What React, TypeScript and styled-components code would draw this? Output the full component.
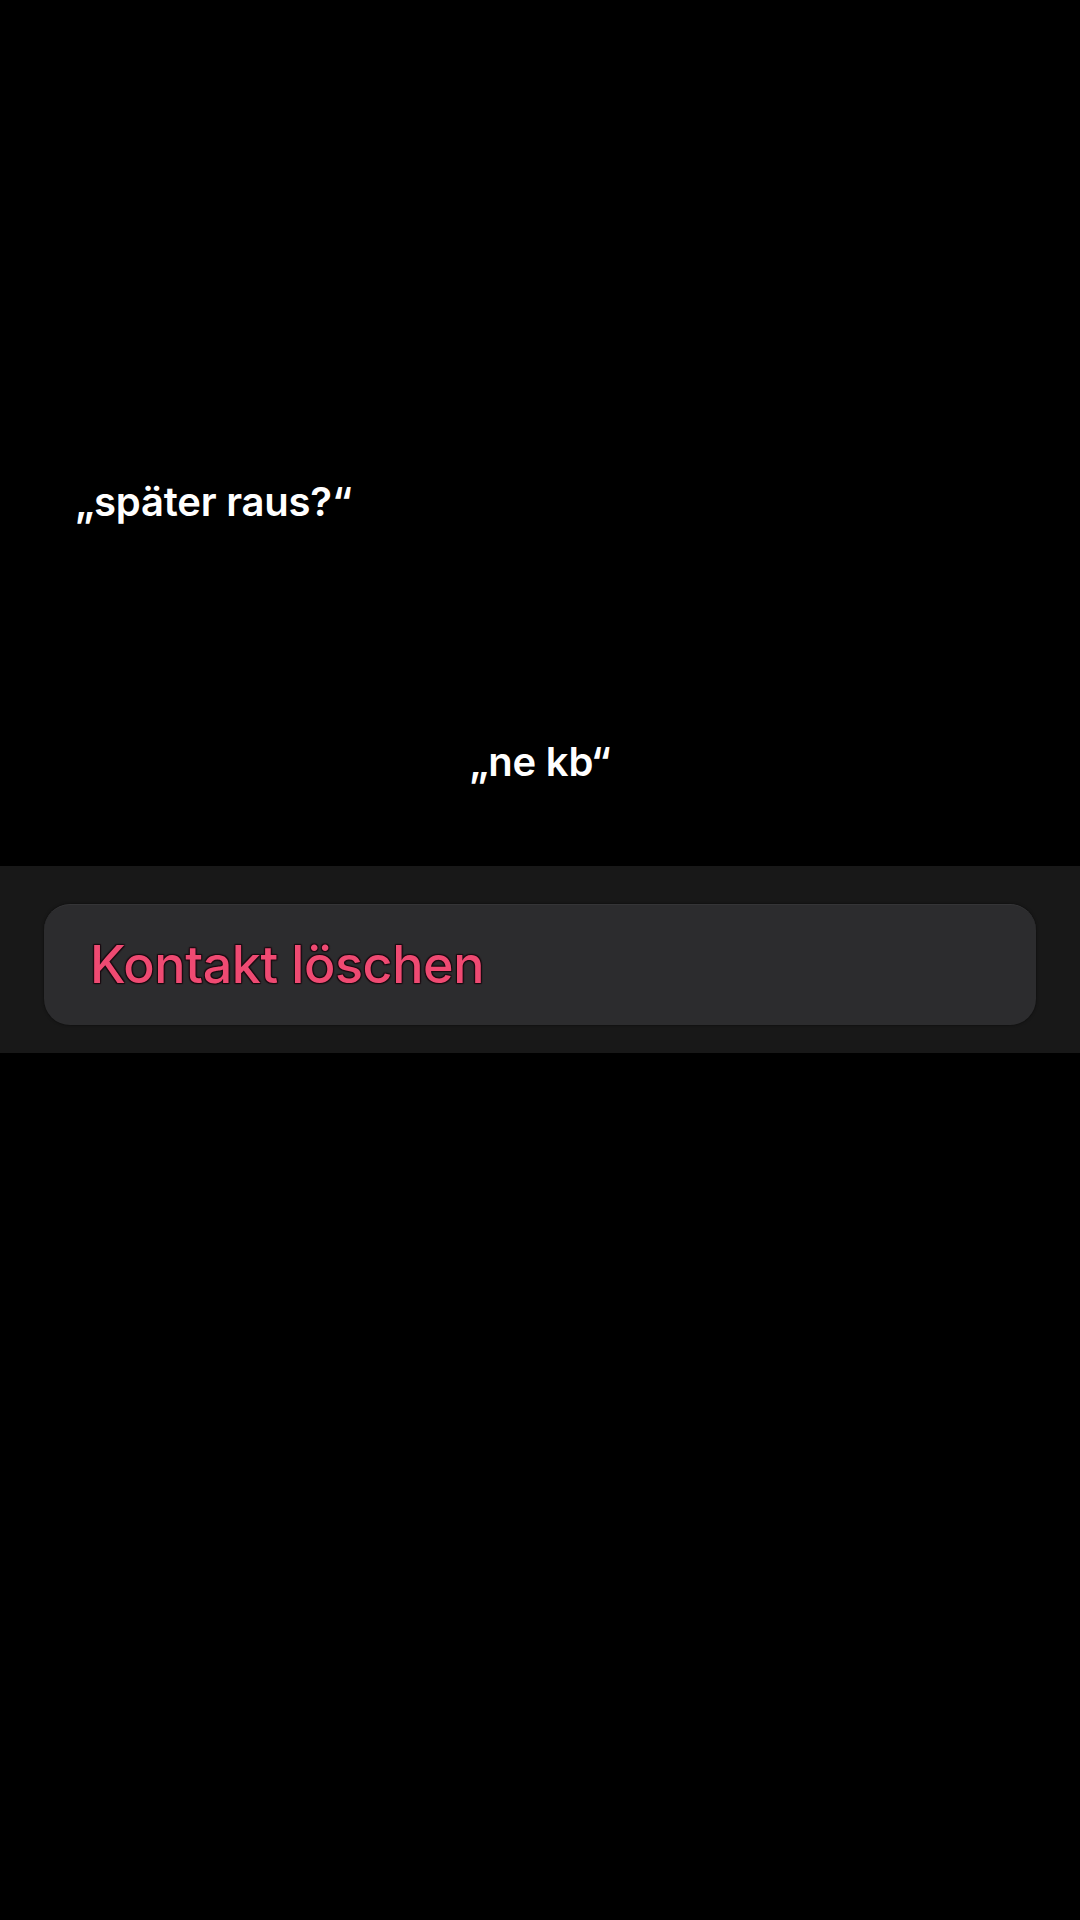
import React from 'react';
import styled, { createGlobalStyle } from 'styled-components';

const GlobalStyle = createGlobalStyle`
  html, body {
    margin: 0;
    padding: 0;
    background-color: #000;
  }
  body {
    font-family: Inter, "Noto Sans", "Liberation Sans", sans-serif;
  }
`;

const Page = styled.div`
  display: flex;
  flex-direction: column;
  width: 1080px;
  height: 1920px;
  background-color: #000;
  overflow: hidden;
`;

const Transcript = styled.div`
  display: flex;
  flex-direction: column;
  height: 866px;
  padding-top: 478px;
  box-sizing: border-box;
`;

const Quote = styled.div<{ align: 'left' | 'center' }>`
  font-size: 40px;
  line-height: 48px;
  font-weight: 600;
  color: #fff;
  letter-spacing: -0.2px;
  text-align: ${props => props.align};
  padding-left: ${props => (props.align === 'left' ? '75px' : '0')};
  margin-bottom: 212px;
`;

const ActionSheet = styled.div`
  height: 187px;
  box-sizing: border-box;
  background-color: #181818;
  padding: 38px 44px 28px;
`;

const ActionButton = styled.button`
  display: flex;
  align-items: center;
  width: 100%;
  height: 121px;
  padding: 0 0 0 46px;
  box-sizing: border-box;
  background-color: #2c2c2e;
  border: none;
  border-top: 1px solid #353537;
  border-radius: 26px;
  box-shadow: 0 0 3px rgba(0, 0, 0, 0.6);
  cursor: pointer;
`;

const ActionLabel = styled.span`
  font-family: Inter, "Noto Sans", "Liberation Sans", sans-serif;
  font-size: 52px;
  line-height: 62px;
  font-weight: 500;
  color: #ef4a72;
  letter-spacing: -0.4px;
  text-shadow: 1px 1px 1px #1a0a10, -1px -1px 1px #1a0a10, 1px -1px 1px #1a0a10, -1px 1px 1px #1a0a10;
`;

const App: React.FC = () => {
  return (
    <Page>
      <GlobalStyle />
      <Transcript>
        <Quote align="left">„später raus?“</Quote>
        <Quote align="center">„ne kb“</Quote>
      </Transcript>
      <ActionSheet>
        <ActionButton>
          <ActionLabel>Kontakt löschen</ActionLabel>
        </ActionButton>
      </ActionSheet>
    </Page>
  );
};

export default App;
